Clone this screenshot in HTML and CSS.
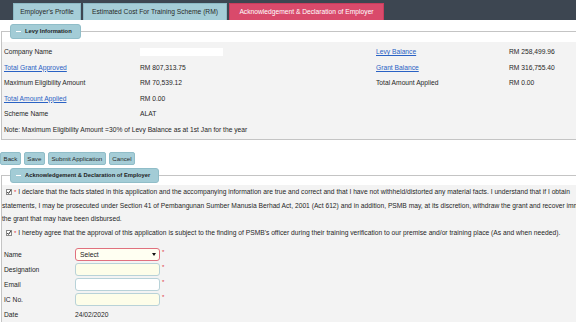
FILE: index.html
```html
<!DOCTYPE html>
<html>
<head>
<meta charset="utf-8">
<link rel="stylesheet" href="styles.css">
</head>
<body>
<div class="page">
  <div class="topbar">
    <div class="tab tab-1">Employer's Profile</div>
    <div class="tab tab-2">Estimated Cost For Training Scheme (RM)</div>
    <div class="tab tab-3">Acknowledgement &amp; Declaration of Employer</div>
  </div>

  <fieldset class="panel levy">
    <legend class="legend"><span class="minus"></span>Levy Information</legend>
    <div class="levy-body">
      <div class="info-grid">
        <div class="lbl">Company Name</div>
        <div class="val"><span class="masked"></span></div>
        <div class="lbl"><a class="lnk" href="#">Levy Balance</a></div>
        <div class="val">RM 258,499.96</div>

        <div class="lbl"><a class="lnk" href="#">Total Grant Approved</a></div>
        <div class="val">RM 807,313.75</div>
        <div class="lbl"><a class="lnk" href="#">Grant Balance</a></div>
        <div class="val">RM 316,755.40</div>

        <div class="lbl">Maximum Eligibility Amount</div>
        <div class="val">RM 70,539.12</div>
        <div class="lbl">Total Amount Applied</div>
        <div class="val">RM 0.00</div>

        <div class="lbl"><a class="lnk" href="#">Total Amount Applied</a></div>
        <div class="val">RM 0.00</div>
        <div class="lbl"></div>
        <div class="val"></div>

        <div class="lbl">Scheme Name</div>
        <div class="val">ALAT</div>
        <div class="lbl"></div>
        <div class="val"></div>

        <div class="lbl note">Note: Maximum Eligibility Amount =30% of Levy Balance as at 1st Jan for the year</div>
      </div>
    </div>
  </fieldset>

  <div class="actions">
    <button class="btn">Back</button>
    <button class="btn">Save</button>
    <button class="btn">Submit Application</button>
    <button class="btn">Cancel</button>
  </div>

  <fieldset class="panel decl">
    <legend class="legend"><span class="minus"></span>Acknowledgement &amp; Declaration of Employer</legend>
    <div class="decl-body">
      <p class="decl-text"><svg class="chk" width="6" height="6" viewBox="0 0 6 6"><rect x=".5" y=".5" width="5" height="5" fill="#fff" stroke="#8a8a8a"/><path d="M1.3 3 L2.5 4.4 L4.9 1.1" fill="none" stroke="#222" stroke-width="1"/></svg><span class="req">*</span> I declare that the facts stated in this application and the accompanying information are true and correct and that I have not withheld/distorted any material facts. I understand that if I obtain<br>statements, I may be prosecuted under Section 41 of Pembangunan Sumber Manusia Berhad Act, 2001 (Act 612) and in addition, PSMB may, at its discretion, withdraw the grant and recover immediately<br>the grant that may have been disbursed.</p>
      <p class="decl-text second"><svg class="chk" width="6" height="6" viewBox="0 0 6 6"><rect x=".5" y=".5" width="5" height="5" fill="#fff" stroke="#8a8a8a"/><path d="M1.3 3 L2.5 4.4 L4.9 1.1" fill="none" stroke="#222" stroke-width="1"/></svg><span class="req">*</span> I hereby agree that the approval of this application is subject to the finding of PSMB's officer during their training verification to our premise and/or training place (As and when needed).</p>

      <div class="form">
        <div class="f-lbl">Name</div>
        <div class="select"><span>Select</span><span class="arrow"></span></div>
        <div class="star">*</div>

        <div class="f-lbl">Designation</div>
        <input class="inp" type="text">
        <div class="star">*</div>

        <div class="f-lbl">Email</div>
        <input class="inp white" type="text">
        <div class="star">*</div>

        <div class="f-lbl">IC No.</div>
        <input class="inp" type="text">
        <div class="star">*</div>

        <div class="f-lbl">Date</div>
        <div class="f-val">24/02/2020</div>
        <div></div>
      </div>
    </div>
  </fieldset>
</div>
</body>
</html>
```

FILE: styles.css
```css
* { box-sizing: border-box; }

html, body {
  margin: 0;
  width: 576px;
  height: 322px;
  overflow: hidden;
  background: #fff;
}

body {
  font-family: "Liberation Sans", Arial, sans-serif;
  font-size: 6.7px;
  color: #262626;
}

.page {
  width: 640px;
}

/* top tabs */
.topbar {
  height: 20px;
  background: #3d4651;
  display: flex;
  align-items: flex-end;
  gap: 2px;
  padding-left: 13px;
}

.tab {
  height: 17px;
  line-height: 16px;
  text-align: center;
  background: #a5cdd7;
  color: #2a2a2a;
  border: 1px solid #8cb9c4;
  border-bottom: 0;
  white-space: nowrap;
}

.tab-1 { width: 68px; }
.tab-2 { width: 144px; }
.tab-3 {
  width: 155px;
  background: #d94a6b;
  border-color: #c73d5c;
  color: #fff;
}

/* panels */
.panel {
  margin: 4px 0 0 1px;
  padding: 0;
  border: 1px solid #c4c4c4;
  min-width: 0;
  background: #fff;
}

.legend {
  margin-left: 8px;
  padding: 0 8px 0 5px;
  height: 15px;
  line-height: 13px;
  background: #a3ccd6;
  border: 1px solid #90bdc8;
  border-radius: 3px;
  font-weight: bold;
  font-size: 5.8px;
  color: #222;
  white-space: nowrap;
}

.minus {
  display: inline-block;
  width: 5px;
  height: 1.5px;
  background: #fff;
  vertical-align: middle;
  margin-right: 4px;
}

.levy-body {
  margin-top: 3px;
  background: #f3f3f3;
  padding: 2px 0 2px;
}

.info-grid {
  display: grid;
  grid-template-columns: 138px 234px 135px 1fr;
  grid-auto-rows: 15.5px;
  align-items: center;
}

.lbl {
  padding-left: 2px;
  white-space: nowrap;
}

.val {
  white-space: nowrap;
}

.note {
  grid-column: 1 / -1;
}

.lnk {
  color: #2a62c4;
  text-decoration: underline;
}

.masked {
  display: inline-block;
  width: 83px;
  height: 8px;
  background: #fff;
  vertical-align: middle;
}

/* buttons */
.actions {
  display: flex;
  gap: 3px;
  margin-top: 12px;
}

.btn {
  height: 13px;
  line-height: 11px;
  padding: 0 2.5px;
  margin: 0;
  background: #a5cdd7;
  border: 1px solid #90bdc8;
  border-radius: 2px;
  font-family: inherit;
  font-size: 6.2px;
  color: #2a2a2a;
}

/* declaration */
.decl {
  margin-top: 3px;
}

.decl-body {
  margin-top: 2px;
  background: #f3f3f3;
  padding: 0 0 20px 0;
}

.decl-text {
  margin: 0;
  line-height: 13px;
  white-space: nowrap;
}

.decl-text.second {
  margin-top: 1px;
}

.chk {
  display: inline-block;
  vertical-align: -0.5px;
  margin-left: 4px;
}

.req {
  color: #e0303a;
  margin-left: 2px;
  font-size: 6px;
}

.form {
  display: grid;
  grid-template-columns: 73px 85px auto;
  grid-auto-rows: 13px;
  row-gap: 2px;
  margin-top: 8px;
  align-items: center;
}

.f-lbl {
  padding-left: 2px;
}

.select {
  height: 13px;
  border: 1px solid #e0707e;
  border-radius: 3px;
  background: #fffff2;
  display: flex;
  align-items: center;
  justify-content: space-between;
  padding: 0 3px 0 4px;
  color: #222;
}

.arrow {
  width: 0;
  height: 0;
  border-left: 2px solid transparent;
  border-right: 2px solid transparent;
  border-top: 3px solid #111;
}

.inp {
  height: 13px;
  width: 85px;
  margin: 0;
  border: 1px solid #b8d2d8;
  border-radius: 3px;
  background: #fdfde9;
  padding: 0 3px;
  font-family: inherit;
  font-size: 6.7px;
}

.inp.white {
  background: #fff;
}

.star {
  color: #e0303a;
  font-size: 6px;
  align-self: start;
  padding-left: 2px;
  line-height: 8px;
}

.f-val {
  white-space: nowrap;
}
```
